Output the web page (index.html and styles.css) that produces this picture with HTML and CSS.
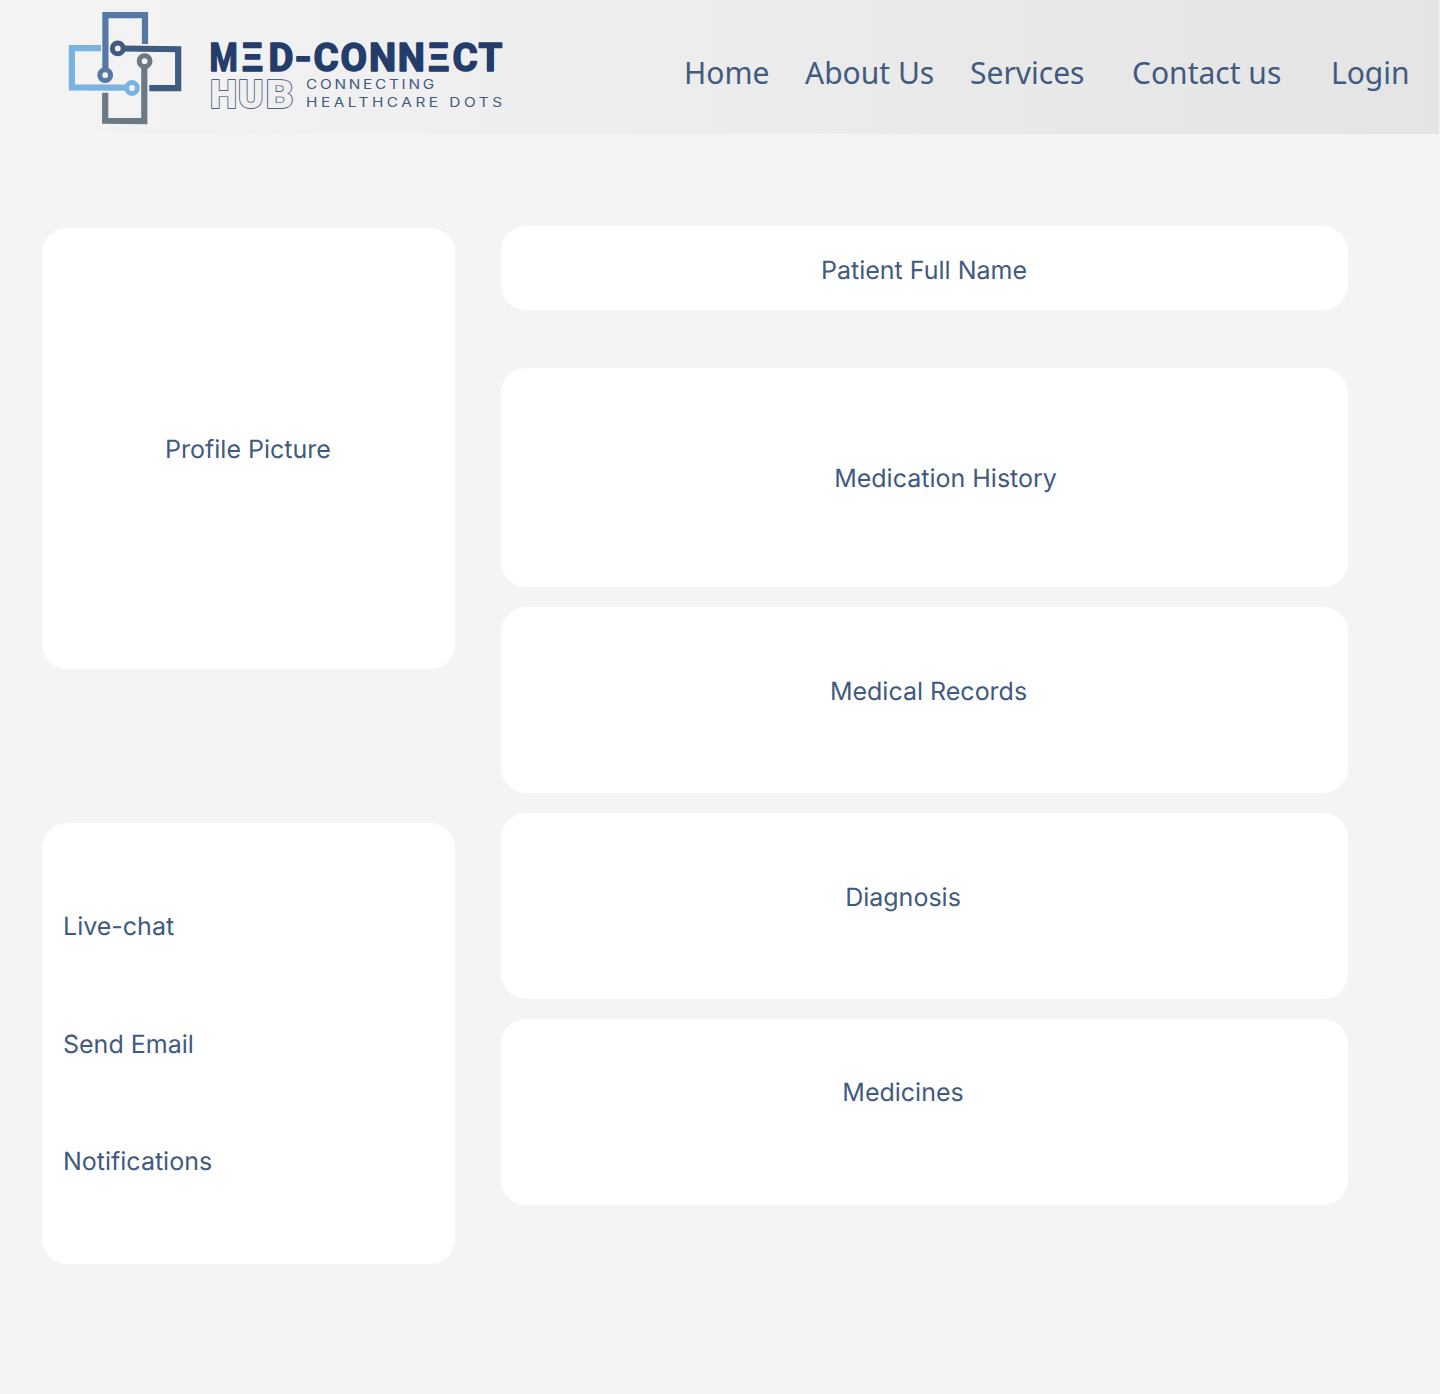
FILE: index.html
```html
<!DOCTYPE html>
<html lang="en">
<head>
<meta charset="utf-8">
<title>Med-Connect Hub</title>
<link rel="stylesheet" href="styles.css">
</head>
<body>
<header class="header">
  <svg class="logo" width="520" height="134" viewBox="0 0 520 134" role="img" aria-label="Med-Connect Hub">
    <g class="mark">
      <path class="steel" d="M105.4 70V15.2H145V44"/>
      <circle class="steel" cx="105.2" cy="75.2" r="5.4"/>
      <path class="navy" d="M123 48.5L178.2 49.2V88.2H149.3"/>
      <circle class="navy" cx="117.8" cy="48.4" r="5.4"/>
      <path class="sky" d="M101 48.2H71.9V87.3L127 87.7"/>
      <circle class="sky" cx="132" cy="88" r="5.4"/>
      <path class="slate" d="M105.2 92.8V120.8L144.3 121.2V66"/>
      <circle class="slate" cx="144.6" cy="61.2" r="5.4"/>
    </g>
    <g class="wordmark">
      <text transform="translate(209.6 70.6) scale(.84 1)">M</text>
      <text x="241.4 268.4" y="70.6">ΞD</text>
      <text transform="translate(294.4 70.6) scale(1.15 1)">-</text>
      <text x="313.4 340.4 369 397.7 427.8 452.4 478.4" y="70.6">CONNΞCT</text>
    </g>
    <text class="hub" x="210 238" y="107.7">HU</text>
    <text class="hub" transform="translate(265.8 107.7) scale(1.12 1)">B</text>
    <g class="tagline">
      <text transform="translate(306 89) scale(1.2 1)" textLength="106.8">CONNECTING</text>
      <text transform="translate(306 107.3) scale(1.2 1)" textLength="163.4">HEALTHCARE DOTS</text>
    </g>
  </svg>
  <nav class="nav">
    <a>Home</a><a>About Us</a><a>Services</a><a>Contact us</a><a>Login</a>
  </nav>
</header>
<main class="main">
  <aside class="side">
    <section class="card picture">Profile Picture</section>
    <section class="card actions"><a>Live-chat</a><a>Send Email</a><a>Notifications</a></section>
  </aside>
  <div class="details">
    <section class="card name">Patient Full Name</section>
    <section class="card history">Medication History</section>
    <section class="card records">Medical Records</section>
    <section class="card diagnosis">Diagnosis</section>
    <section class="card medicines">Medicines</section>
  </div>
</main>
</body>
</html>
```
FILE: styles.css
```css
* { box-sizing: border-box; }
body {
  margin: 0;
  min-height: 1394px;
  background: #f4f4f4;
  color: #415a80;
  font: 400 25px/30px Inter, sans-serif;
}
.header {
  display: flex;
  width: 1439px;
  height: 134px;
  background: linear-gradient(90deg, #f4f4f4, #e4e4e4);
}
.logo { flex: none; display: block; }
.mark { fill: none; stroke-width: 6.2; }
.mark circle { stroke-width: 5; }
.steel { stroke: #5578a4; }
.navy { stroke: #415a7f; }
.sky { stroke: #7ab3df; }
.slate { stroke: #6b7984; }
.wordmark {
  font: 700 38.4px Roboto, sans-serif;
  fill: #233c6b;
  stroke: #233c6b;
  stroke-width: 1.5;
  stroke-linejoin: round;
}
.hub {
  font: 900 38.4px Roboto, sans-serif;
  fill: #f0f0f0;
  stroke: #4d628c;
  stroke-width: 1.8;
  stroke-linejoin: round;
  paint-order: stroke;
}
.tagline { font: 400 12.8px Inter, sans-serif; fill: #415a80; }
.nav {
  display: grid;
  grid-template-columns: 121px 165px 162px 199px 100px;
  margin-left: 164px;
  padding-top: 52px;
  font: 400 30px/41px "Noto Sans", sans-serif;
  white-space: nowrap;
}
.main {
  display: grid;
  grid-template-columns: 413px 847px;
  column-gap: 46px;
  padding: 92px 0 0 42px;
}
.side { display: grid; align-content: start; row-gap: 154px; padding-top: 2px; }
.details { display: grid; align-content: start; row-gap: 20px; }
.card {
  display: flex;
  align-items: center;
  justify-content: center;
  border-radius: 25px;
  background: #fff;
  font-weight: 375;
  text-rendering: geometricPrecision;
}
.picture { height: 441px; padding: 2px 1px 0 0; }
.actions {
  flex-direction: column;
  align-items: flex-start;
  gap: 87.5px;
  height: 441px;
  padding: 2px 0 0 21px;
}
.name { height: 84px; margin-bottom: 38px; padding: 6px 1px 0 0; }
.history { height: 219px; padding: 2px 0 0 42px; }
.records { height: 186px; padding: 0 0 16px 8px; }
.diagnosis { height: 186px; padding: 0 43px 16px 0; }
.medicines { height: 186px; padding: 0 43px 38px 0; }
```
